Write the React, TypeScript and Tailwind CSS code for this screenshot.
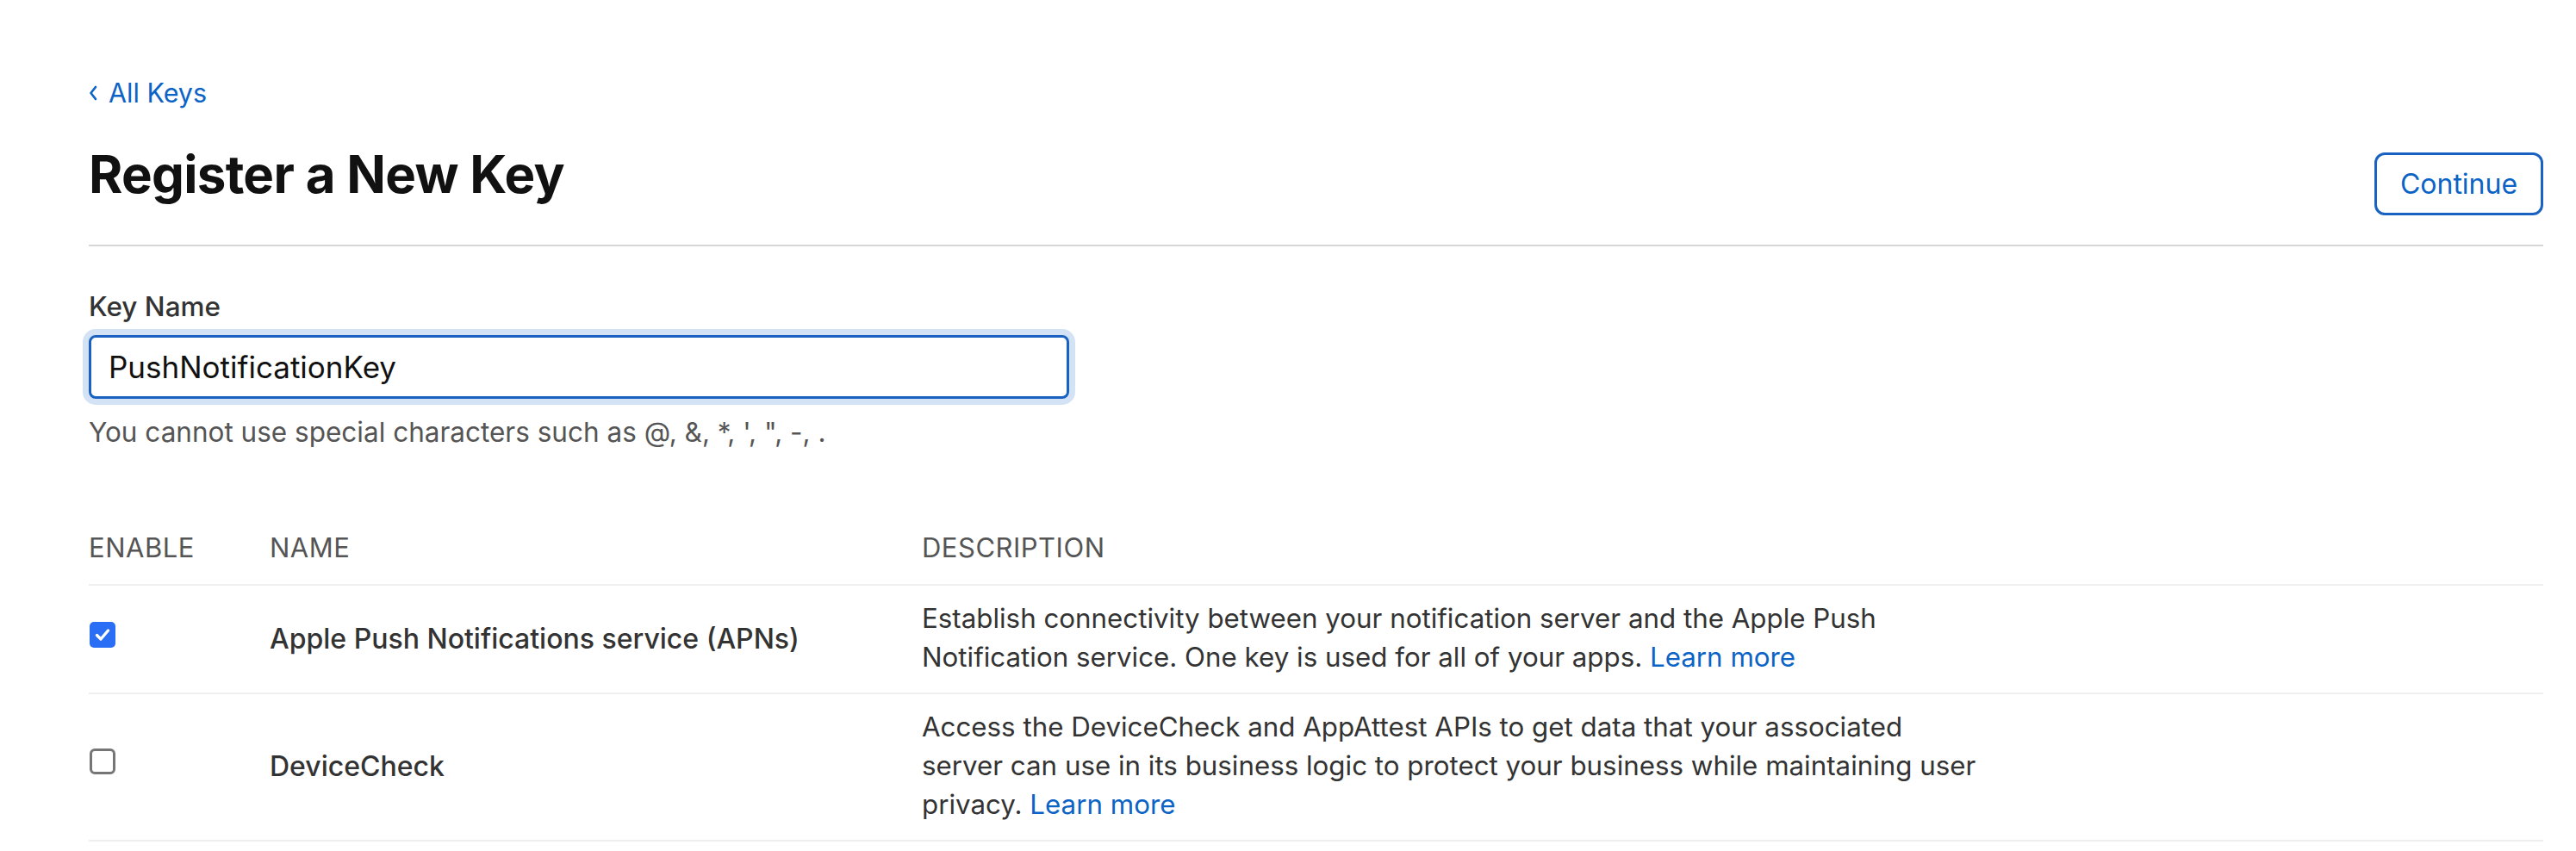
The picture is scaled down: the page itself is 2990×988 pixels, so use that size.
import { useState } from 'react';

type Service = {
  id: string;
  name: string;
  description: string;
  enabled: boolean;
};

const services: Service[] = [
  {
    id: 'apns',
    name: 'Apple Push Notifications service (APNs)',
    description:
      'Establish connectivity between your notification server and the Apple Push Notification service. One key is used for all of your apps.',
    enabled: true,
  },
  {
    id: 'devicecheck',
    name: 'DeviceCheck',
    description:
      'Access the DeviceCheck and AppAttest APIs to get data that your associated server can use in its business logic to protect your business while maintaining user privacy.',
    enabled: false,
  },
];

function Checkbox({ checked, onChange }: { checked: boolean; onChange: () => void }) {
  return (
    <button
      type="button"
      onClick={onChange}
      className={
        checked
          ? 'flex h-[30px] w-[30px] items-center justify-center rounded-[5px] bg-[#2a6ef5]'
          : 'h-[30px] w-[30px] rounded-[6px] border-[3px] border-[#767676] bg-white'
      }
    >
      {checked && (
        <svg width="20" height="20" viewBox="0 0 20 20" fill="none">
          <path d="M3.5 10.5l4.5 4.5 8.5-10" stroke="white" strokeWidth="3.4" strokeLinecap="round" strokeLinejoin="round" />
        </svg>
      )}
    </button>
  );
}

export default function App() {
  const [keyName, setKeyName] = useState('PushNotificationKey');
  const [enabled, setEnabled] = useState<Record<string, boolean>>(
    Object.fromEntries(services.map((s) => [s.id, s.enabled]))
  );

  return (
    <div className="min-h-screen bg-white font-['Inter',sans-serif] text-[#333]">
      <div className="pl-[103px] pr-[38px] pt-[85px]">
        <a href="#" className="flex items-center gap-[13px] text-[30.5px] leading-[45px] text-[#0b63c5]">
          <svg width="10" height="18" viewBox="0 0 10 18" fill="none">
            <path d="M8 2L2.5 9 8 16" stroke="currentColor" strokeWidth="2.6" strokeLinecap="round" strokeLinejoin="round" />
          </svg>
          All Keys
        </a>

        <div className="mt-[39px] flex items-start justify-between border-b-2 border-[#d6d6d6] pb-[34px]">
          <h1 className="text-[60px] font-bold leading-[66px] tracking-[-0.7px] text-[#111]">Register a New Key</h1>
          <button
            type="button"
            className="mt-[8px] h-[73px] w-[196px] rounded-[12px] border-[3px] border-[#1a62c1] text-[32px] text-[#0b63c5]"
          >
            Continue
          </button>
        </div>

        <label className="mt-[47px] block text-[31.5px] font-medium leading-[45px] text-[#333]">Key Name</label>
        <input
          value={keyName}
          onChange={(e) => setKeyName(e.target.value)}
          className="mt-[11px] block h-[74px] w-[1138px] rounded-[8px] border-[3px] border-[#1a62c1] pl-[20px] text-[35px] text-[#111] shadow-[0_0_0_7px_#d3e2f5] outline-none"
        />
        <p className="mt-[18px] text-[31.5px] leading-[41px] text-[#555]">
          You cannot use special characters such as @, &amp;, *, ', ", -, .
        </p>

        <div className="mt-[91px]">
          <div className="grid grid-cols-[210px_757px_1fr] border-b-2 border-[#efefef] pb-[20px] text-[31px] leading-[45px] tracking-[0.5px] text-[#555]">
            <div>ENABLE</div>
            <div>NAME</div>
            <div>DESCRIPTION</div>
          </div>
          {services.map((s) => (
            <div
              key={s.id}
              className="grid grid-cols-[210px_757px_1fr] items-center border-b-2 border-[#efefef] pt-[16px] pb-[18px]"
            >
              <div className="mb-[8px] pl-px">
                <Checkbox
                  checked={enabled[s.id]}
                  onChange={() => setEnabled((prev) => ({ ...prev, [s.id]: !prev[s.id] }))}
                />
              </div>
              <div className="text-[32px] font-medium leading-[45px] text-[#333]">{s.name}</div>
              <p className="max-w-[1240px] text-[31.3px] leading-[45px] text-[#333]">
                {s.description}{' '}
                <a href="#" className="text-[#0b63c5]">
                  Learn more
                </a>
              </p>
            </div>
          ))}
        </div>
      </div>
    </div>
  );
}
